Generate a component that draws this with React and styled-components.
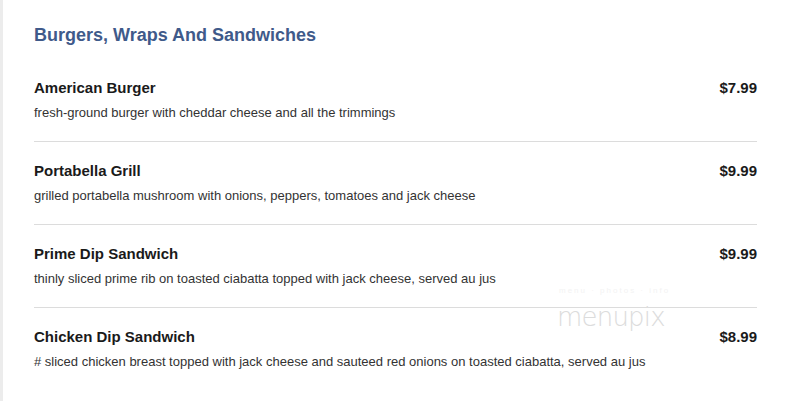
import styled, { createGlobalStyle } from "styled-components";

const GlobalStyle = createGlobalStyle`
  html, body {
    margin: 0;
    padding: 0;
    background: #fff;
  }
  body {
    font-family: "Liberation Sans", Arial, sans-serif;
  }
`;

const Page = styled.div`
  position: relative;
  box-sizing: border-box;
  width: 788px;
  height: 401px;
  padding: 24px 31px 0 34px;
  border-left: 3px solid #ececec;
  overflow: hidden;
`;

const Section = styled.div`
  margin-left: -3px;
`;

const Heading = styled.h2`
  margin: 0 0 13px;
  font-size: 18px;
  line-height: 22px;
  font-weight: bold;
  color: #3f5a8a;
`;

const Item = styled.div`
  padding: 20px 0 20px;
  border-top: ${(p) => (p.first ? "none" : "1px solid #dcdcdc")};
`;

const Row = styled.div`
  display: flex;
  justify-content: space-between;
  align-items: baseline;
`;

const Name = styled.div`
  font-size: 15px;
  line-height: 18px;
  font-weight: bold;
  color: #1a1a1a;
`;

const Price = styled.div`
  font-size: 15px;
  line-height: 18px;
  font-weight: bold;
  color: #1a1a1a;
`;

const Desc = styled.div`
  margin-top: 8px;
  font-size: 13px;
  line-height: 16px;
  color: #333;
`;

const Watermark = styled.div`
  position: absolute;
  left: 554px;
  top: 302px;
  font-family: "DejaVu Sans", sans-serif;
  font-weight: 200;
  font-size: 26px;
  letter-spacing: -0.8px;
  color: #dcdcdc;
  pointer-events: none;
`;

const WatermarkTag = styled.div`
  position: absolute;
  left: 556px;
  top: 286px;
  font-size: 8px;
  letter-spacing: 2px;
  color: #f3f3f3;
  pointer-events: none;
`;

const items = [
  {
    name: "American Burger",
    price: "$7.99",
    desc: "fresh-ground burger with cheddar cheese and all the trimmings",
  },
  {
    name: "Portabella Grill",
    price: "$9.99",
    desc: "grilled portabella mushroom with onions, peppers, tomatoes and jack cheese",
  },
  {
    name: "Prime Dip Sandwich",
    price: "$9.99",
    desc: "thinly sliced prime rib on toasted ciabatta topped with jack cheese, served au jus",
  },
  {
    name: "Chicken Dip Sandwich",
    price: "$8.99",
    desc: "# sliced chicken breast topped with jack cheese and sauteed red onions on toasted ciabatta, served au jus",
  },
];

export default function App() {
  return (
    <>
      <GlobalStyle />
      <Page>
        <Section>
          <Heading>Burgers, Wraps And Sandwiches</Heading>
          {items.map((it, i) => (
            <Item key={it.name} first={i === 0}>
              <Row>
                <Name>{it.name}</Name>
                <Price>{it.price}</Price>
              </Row>
              <Desc>{it.desc}</Desc>
            </Item>
          ))}
        </Section>
        <WatermarkTag>menu · photos · info</WatermarkTag>
        <Watermark>menupix</Watermark>
      </Page>
    </>
  );
}
